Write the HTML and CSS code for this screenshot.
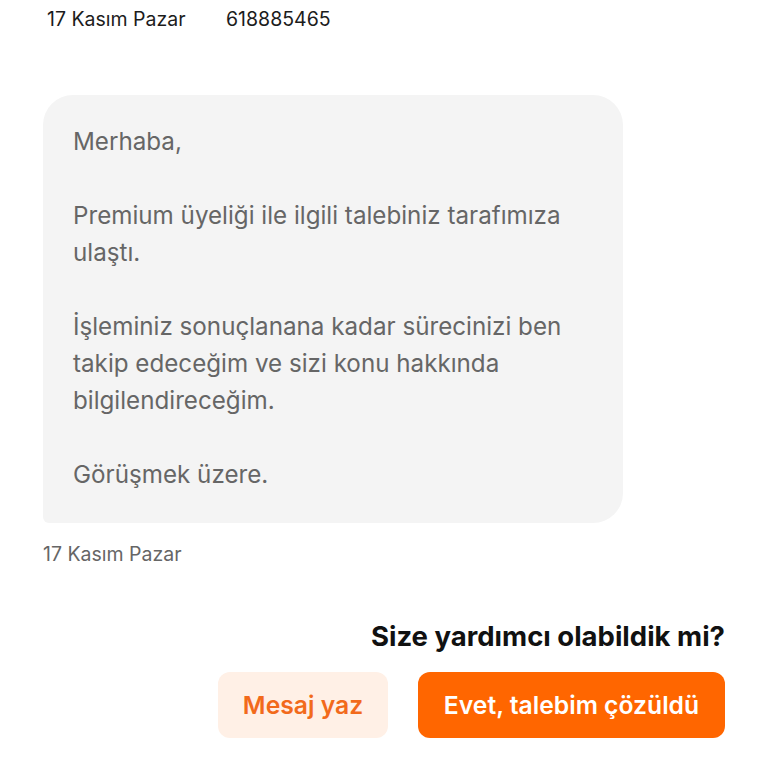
FILE: index.html
```html
<!DOCTYPE html>
<html lang="tr">
<head>
<meta charset="utf-8">
<link rel="stylesheet" href="styles.css">
</head>
<body>
<div class="page">
  <div class="info-row">
    <span class="info-date">17 Kasım Pazar</span>
    <span class="info-num">618885465</span>
  </div>
  <div class="bubble">
    <p>Merhaba,</p>
    <p>Premium üyeliği ile ilgili talebiniz tarafımıza<br>ulaştı.</p>
    <p>İşleminiz sonuçlanana kadar sürecinizi ben<br>takip edeceğim ve sizi konu hakkında<br>bilgilendireceğim.</p>
    <p>Görüşmek üzere.</p>
  </div>
  <div class="msg-date">17 Kasım Pazar</div>
  <div class="feedback">
    <h2 class="question">Size yardımcı olabildik mi?</h2>
    <div class="actions">
      <button class="btn btn-light">Mesaj yaz</button>
      <button class="btn btn-primary">Evet, talebim çözüldü</button>
    </div>
  </div>
</div>
</body>
</html>
```
FILE: styles.css
```css
html, body {
  margin: 0;
  padding: 0;
  background: #ffffff;
}
body {
  font-family: Inter, "Noto Sans", sans-serif;
  color: #1a1a1a;
}
.page {
  width: 768px;
  height: 768px;
  overflow: hidden;
}
.info-row {
  display: flex;
  padding: 8px 0 0 47px;
  font-size: 19.5px;
  line-height: 22px;
  color: #1c1c1c;
}
.info-date {
  width: 179px;
}
.bubble {
  margin: 65px 0 0 43px;
  width: 550px;
  padding: 28px 0 30px 30px;
  background: #f4f4f4;
  border-radius: 30px 30px 30px 6px;
  font-size: 24.2px;
  line-height: 37px;
  color: #666666;
}
.bubble p {
  margin: 0 0 37px 0;
}
.bubble p:last-child {
  margin-bottom: 0;
}
.msg-date {
  margin: 17px 0 0 43px;
  font-size: 19.5px;
  line-height: 28px;
  color: #666666;
}
.feedback {
  display: flex;
  flex-direction: column;
  align-items: flex-end;
  padding-right: 43px;
  margin-top: 50px;
}
.question {
  margin: 0;
  font-size: 27.5px;
  line-height: 36px;
  font-weight: 700;
  color: #111111;
}
.actions {
  display: flex;
  gap: 30px;
  margin-top: 18px;
}
.btn {
  height: 66px;
  border: none;
  border-radius: 12px;
  font-family: Inter, "Noto Sans", sans-serif;
  font-size: 24.7px;
  font-weight: 600;
  padding: 0;
}
.btn-light {
  width: 170px;
  background: #fff0e6;
  color: #f26a1b;
}
.btn-primary {
  width: 307px;
  background: #ff6600;
  color: #ffffff;
}
```
